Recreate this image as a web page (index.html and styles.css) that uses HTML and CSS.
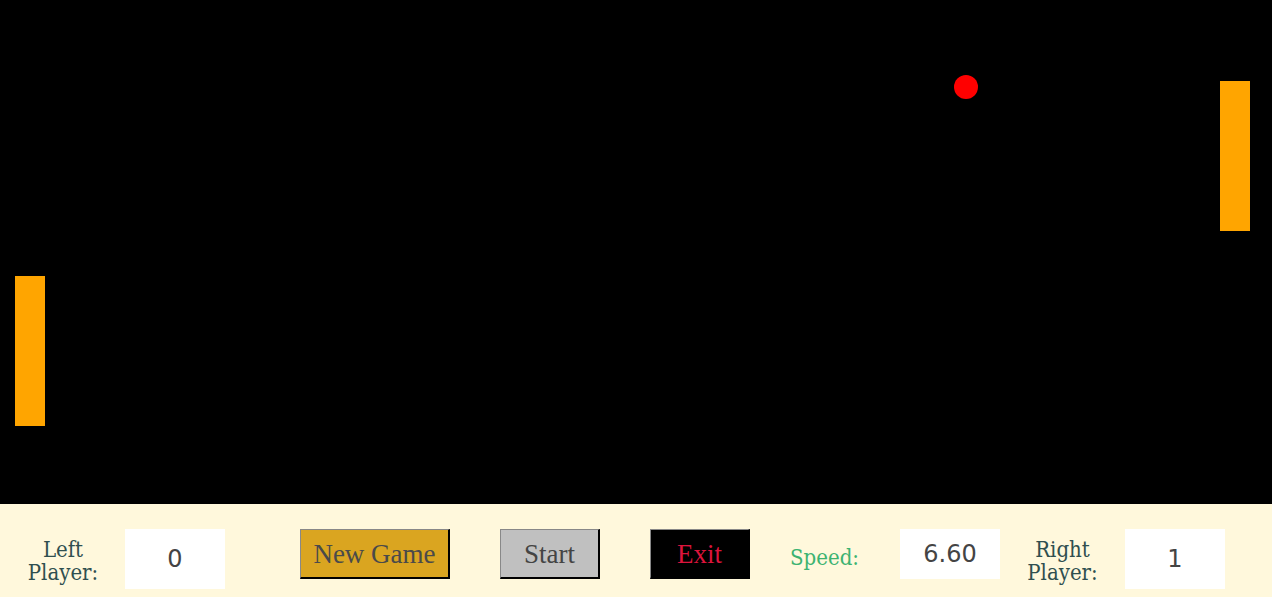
FILE: index.html
```html
<!DOCTYPE html>
<html>
<head>
<meta charset="utf-8">
<title>Pong</title>
<link rel="stylesheet" href="styles.css">
</head>
<body>
<div class="board">
  <svg class="field" width="1272" height="504" viewBox="0 0 1272 504">
    <rect x="0" y="0" width="1272" height="504" fill="#000"/>
    <rect x="15" y="276" width="30" height="150" fill="#ffa500"/>
    <rect x="1220" y="81" width="30" height="150" fill="#ffa500"/>
    <circle cx="966" cy="87" r="12" fill="#ff0000"/>
  </svg>
</div>
<div class="controls">
  <div class="label player-label">Left<br>Player:</div>
  <div class="box score-box ml-26">0</div>
  <button class="btn btn-new">New Game</button>
  <button class="btn btn-start">Start</button>
  <button class="btn btn-exit">Exit</button>
  <div class="label speed-label">Speed:</div>
  <div class="box speed-box">6.60</div>
  <div class="label player-label right-label">Right<br>Player:</div>
  <div class="box score-box ml-27">1</div>
</div>
</body>
</html>
```
FILE: styles.css
```css
html, body {
  margin: 0;
  padding: 0;
  background: #fff8dc;
}
.board {
  width: 1272px;
  height: 504px;
  background: #000;
}
.field {
  display: block;
}
.controls {
  display: flex;
  align-items: flex-start;
  box-sizing: border-box;
  height: 93px;
  padding: 25px 0 0 27px;
  background: #fff8dc;
}
.label {
  font-family: "DejaVu Serif Condensed", "DejaVu Serif", serif;
  font-stretch: condensed;
  font-size: 22px;
  color: #2f4f4f;
  white-space: nowrap;
}
.player-label {
  width: 72px;
  text-align: center;
  margin-top: 9px;
  line-height: 23.3px;
}
.right-label {
  margin-left: 27px;
  width: 71px;
}
.speed-label {
  color: #3cb371;
  width: 71px;
  margin-left: 40px;
  margin-top: 17px;
  line-height: 23.3px;
}
.box {
  box-sizing: border-box;
  width: 100px;
  background: #fff;
  display: flex;
  align-items: center;
  justify-content: center;
  font-family: "DejaVu Sans", sans-serif;
  font-size: 24px;
  color: #444;
}
.score-box {
  height: 60px;
}
.speed-box {
  height: 50px;
  margin-left: 39px;
}
.ml-26 { margin-left: 26px; }
.ml-27 { margin-left: 27px; }
.btn {
  box-sizing: border-box;
  height: 50px;
  width: 100px;
  margin: 0 0 0 50px;
  padding: 1px 0 0 0;
  font-family: "Liberation Serif", "Times New Roman", serif;
  font-size: 27px;
  line-height: 46px;
  color: #444;
  border-style: solid;
  border-width: 1px 2px 2px 1px;
  border-color: #888 #000 #000 #888;
  cursor: pointer;
}
.btn-new {
  width: 150px;
  margin-left: 75px;
  background: #daa520;
  color: #4a4a4a;
}
.btn-start {
  background: #c0c0c0;
}
.btn-exit {
  background: #000;
  color: #dc143c;
}
```
